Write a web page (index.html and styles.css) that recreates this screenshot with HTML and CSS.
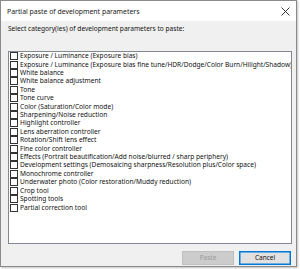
FILE: index.html
```html
<!DOCTYPE html>
<html>
<head>
<meta charset="utf-8">
<link rel="stylesheet" href="styles.css">
</head>
<body>
<div class="dialog">
  <div class="titlebar">
    <span class="title">Partial paste of development parameters</span>
    <svg class="close" width="9" height="9" viewBox="0 0 9 9"><path d="M0.5 0.5 L8.5 8.5 M8.5 0.5 L0.5 8.5" stroke="#222" stroke-width="0.9" fill="none"/></svg>
  </div>
  <div class="content">
    <div class="label">Select category(ies) of development parameters to paste:</div>
    <div class="list">
      <div class="row"><span class="cb"></span><span class="txt">Exposure / Luminance (Exposure bias)</span></div>
      <div class="row"><span class="cb"></span><span class="txt">Exposure / Luminance (Exposure bias fine tune/HDR/Dodge/Color Burn/Hilight/Shadow)</span></div>
      <div class="row"><span class="cb"></span><span class="txt">White balance</span></div>
      <div class="row"><span class="cb"></span><span class="txt">White balance adjustment</span></div>
      <div class="row"><span class="cb"></span><span class="txt">Tone</span></div>
      <div class="row"><span class="cb"></span><span class="txt">Tone curve</span></div>
      <div class="row"><span class="cb"></span><span class="txt">Color (Saturation/Color mode)</span></div>
      <div class="row"><span class="cb"></span><span class="txt">Sharpening/Noise reduction</span></div>
      <div class="row"><span class="cb"></span><span class="txt">Highlight controller</span></div>
      <div class="row"><span class="cb"></span><span class="txt">Lens aberration controller</span></div>
      <div class="row"><span class="cb"></span><span class="txt">Rotation/Shift lens effect</span></div>
      <div class="row"><span class="cb"></span><span class="txt">Fine color controller</span></div>
      <div class="row"><span class="cb"></span><span class="txt">Effects (Portrait beautification/Add noise/blurred / sharp periphery)</span></div>
      <div class="row"><span class="cb"></span><span class="txt">Development settings (Demosaicing sharpness/Resolution plus/Color space)</span></div>
      <div class="row"><span class="cb"></span><span class="txt">Monochrome controller</span></div>
      <div class="row"><span class="cb"></span><span class="txt">Underwater photo (Color restoration/Muddy reduction)</span></div>
      <div class="row"><span class="cb"></span><span class="txt">Crop tool</span></div>
      <div class="row"><span class="cb"></span><span class="txt">Spotting tools</span></div>
      <div class="row"><span class="cb"></span><span class="txt">Partial correction tool</span></div>
    </div>
    <div class="buttons">
      <button class="btn disabled">Paste</button>
      <button class="btn default">Cancel</button>
    </div>
  </div>
</div>
</body>
</html>
```
FILE: styles.css
```css
html, body {
  margin: 0;
  padding: 0;
  background: #ffffff;
}
body {
  width: 300px;
  height: 269px;
  font-family: "Noto Sans", "Open Sans", sans-serif;
  font-size: 6.6px;
  color: #111;
}
.dialog {
  width: 295px;
  height: 265px;
  border: 1px solid #8a8a8a;
  background: #f0f0f0;
  display: flex;
  flex-direction: column;
  box-shadow: 1px 1px 2px rgba(0,0,0,0.25);
}
.titlebar {
  height: 20px;
  background: #ffffff;
  display: flex;
  align-items: center;
  justify-content: space-between;
  padding: 0 6px 0 6px;
  flex: none;
}
.title {
  font-size: 6.9px;
  color: #1a1a1a;
}
.close {
  display: block;
}
.content {
  flex: 1;
  display: flex;
  flex-direction: column;
  padding: 0 4px 0 7px;
}
.label {
  margin-top: 3px;
  height: 9px;
  line-height: 9px;
  font-size: 6.6px;
}
.list {
  margin-top: 18px;
  height: 193px;
  background: #ffffff;
  border: 1px solid #828790;
  padding: 0 0 0 1px;
  overflow: hidden;
  box-sizing: border-box;
}
.row {
  height: 8.42px;
  display: flex;
  align-items: center;
  white-space: nowrap;
}
.cb {
  width: 6px;
  height: 6px;
  border: 1px solid #333;
  background: #fff;
  flex: none;
  margin-right: 2px;
}
.txt {
  line-height: 8px;
  font-size: 6.6px;
}
.buttons {
  display: flex;
  justify-content: flex-end;
  gap: 5px;
  margin-top: 7px;
  padding-right: 1px;
}
.btn {
  width: 52px;
  height: 14px;
  font-family: "Noto Sans", "Open Sans", sans-serif;
  font-size: 6.5px;
  padding: 0;
  line-height: 12px;
  box-sizing: border-box;
}
.btn.disabled {
  background: #cccccc;
  border: 1px solid #bfbfbf;
  color: #9a9a9a;
}
.btn.default {
  background: #e1e1e1;
  border: 1px solid #0078d7;
  color: #111;
  box-shadow: inset 0 0 0 0.5px #0078d7;
}
```
